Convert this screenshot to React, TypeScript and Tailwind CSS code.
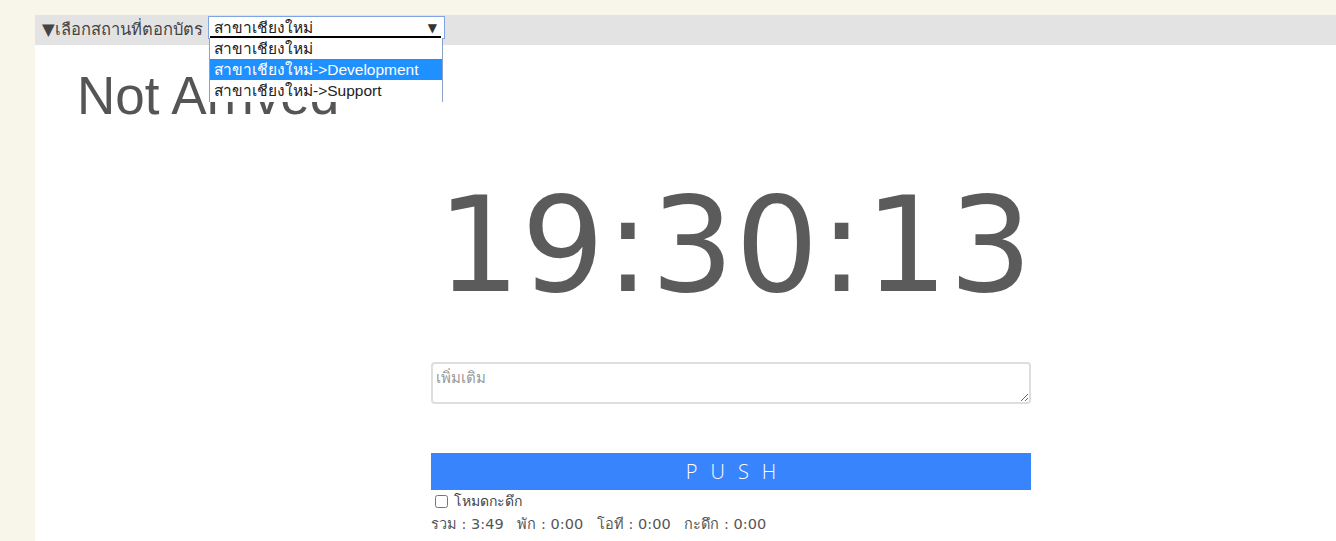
import React from "react";

export default function App() {
  return (
    <div className="w-[1336px] h-[541px] overflow-hidden bg-[#f8f6ea] pt-[15px] pl-[35px] font-['Tahoma','DejaVu_Sans',sans-serif]">
      <div className="bg-white h-full flex flex-col">
        <div className="h-[30px] bg-[#e3e3e3] flex items-center pl-[7px] relative">
          <span className="text-[16.5px] text-[#444] leading-none">▼เลือกสถานที่ตอกบัตร</span>
          <div className="absolute left-[173px] top-[1px] w-[237px] h-[23px] border border-[#7ea4e6] bg-white">
            <div className="absolute left-[5px] top-[1px] text-[15.5px] text-[#222] leading-[20px]">สาขาเชียงใหม่</div>
            <div className="absolute left-[1px] right-[3px] top-[19px] h-[2px] bg-black"></div>
            <div className="absolute right-[7px] top-[2px] text-[12px] text-[#333]">▼</div>
          </div>
          <div className="absolute left-[174px] top-[23px] w-[234px] h-[64px] bg-white border-x border-[#8ca0c8] overflow-hidden z-10 text-[15.5px] leading-[21px] text-[#222] font-['Liberation_Sans','Tahoma',sans-serif]">
            <div className="px-[4px] h-[21px]">สาขาเชียงใหม่</div>
            <div className="px-[4px] h-[21px] bg-[#1e90ff] text-white">สาขาเชียงใหม่-&gt;Development</div>
            <div className="px-[4px] h-[21px]">สาขาเชียงใหม่-&gt;Support</div>
          </div>
        </div>
        <div className="pl-[42px] pt-[22px] text-[53px] leading-[58px] text-[#555] font-['Liberation_Sans',Arial,sans-serif]">Not Arrived</div>
        <div className="ml-[396px] w-[600px] flex flex-col">
          <div className="mt-[46px] pl-[6px] text-[131px] leading-[150px] tracking-[1px] text-[#5b5b5b] font-['DejaVu_Sans',sans-serif] whitespace-nowrap">19:30:13</div>
          <textarea
            placeholder="เพิ่มเติม"
            className="mt-[41px] w-[600px] h-[42px] border-2 border-[#dedede] rounded-[4px] px-[3px] py-[3px] text-[15px] text-[#555] placeholder:text-[#999] resize-y outline-none"
          />
          <button className="mt-[49px] w-[600px] h-[37px] bg-[#3884fc] text-white text-[20px] tracking-[13px] pl-[13px] font-['Open_Sans','DejaVu_Sans',sans-serif] font-light">PUSH</button>
          <label className="flex items-center gap-[6px] pl-[4px] mt-[1px] text-[14px] text-[#444] leading-[20px]">
            <input type="checkbox" className="w-[13px] h-[13px] m-0" />
            <span>โหมดกะดึก</span>
          </label>
          <div className="mt-[3px] text-[14.5px] text-[#555] leading-[20px] whitespace-pre">รวม : 3:49   พัก : 0:00   โอที : 0:00   กะดึก : 0:00</div>
        </div>
      </div>
    </div>
  );
}
